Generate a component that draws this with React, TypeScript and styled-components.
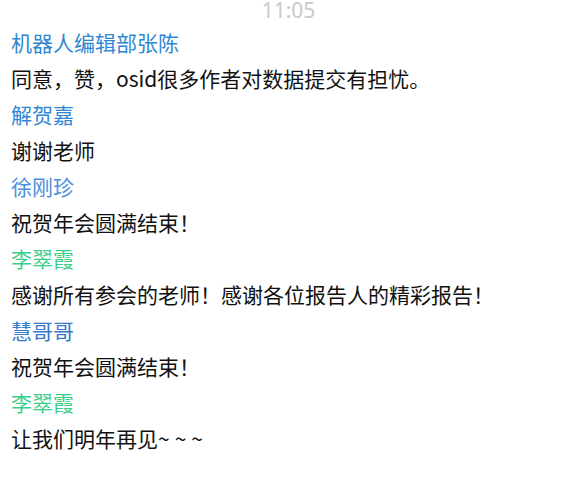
import React from "react";
import styled, { createGlobalStyle } from "styled-components";

const Global = createGlobalStyle`
  html, body { margin: 0; padding: 0; background: #ffffff; }
  body { font-family: "Microsoft YaHei", "Noto Sans CJK SC", "Noto Sans", sans-serif; }
`;

const Chat = styled.div`
  width: 566px;
  height: 477px;
  overflow: hidden;
  box-sizing: border-box;
  padding: 0 0 0 11px;
  display: flex;
  flex-direction: column;
`;

const Time = styled.div`
  font-family: "Noto Sans", "Noto Sans CJK SC", sans-serif;
  font-size: 21px;
  line-height: 20px;
  height: 24px;
  color: #cacaca;
  text-align: center;
  padding-left: 0;
`;

const Name = styled.div<{ $color: string }>`
  font-size: 21px;
  line-height: 36px;
  height: 36px;
  color: ${(p) => p.$color};
  white-space: nowrap;
`;

const Message = styled.div`
  font-size: 21px;
  line-height: 36px;
  height: 36px;
  color: #111111;
  white-space: nowrap;
`;

const Tilde = styled.span`
  letter-spacing: 5px;
`;

const BLUE = "#2f87d3";
const BLUE2 = "#4a8fe0";
const BLUE3 = "#3579c9";
const GREEN = "#3dce8b";

const items: { name: string; color: string; text: React.ReactNode }[] = [
  { name: "机器人编辑部张陈", color: BLUE, text: "同意，赞，osid很多作者对数据提交有担忧。" },
  { name: "解贺嘉", color: BLUE, text: "谢谢老师" },
  { name: "徐刚珍", color: BLUE2, text: "祝贺年会圆满结束！" },
  { name: "李翠霞", color: GREEN, text: "感谢所有参会的老师！感谢各位报告人的精彩报告！" },
  { name: "慧哥哥", color: BLUE3, text: "祝贺年会圆满结束！" },
  {
    name: "李翠霞",
    color: GREEN,
    text: (
      <>
        让我们明年再见<Tilde>~~~</Tilde>
      </>
    ),
  },
];

export default function App() {
  return (
    <>
      <Global />
      <Chat>
        <Time>11:05</Time>
        {items.map((it, i) => (
          <React.Fragment key={i}>
            <Name $color={it.color}>{it.name}</Name>
            <Message>{it.text}</Message>
          </React.Fragment>
        ))}
      </Chat>
    </>
  );
}
